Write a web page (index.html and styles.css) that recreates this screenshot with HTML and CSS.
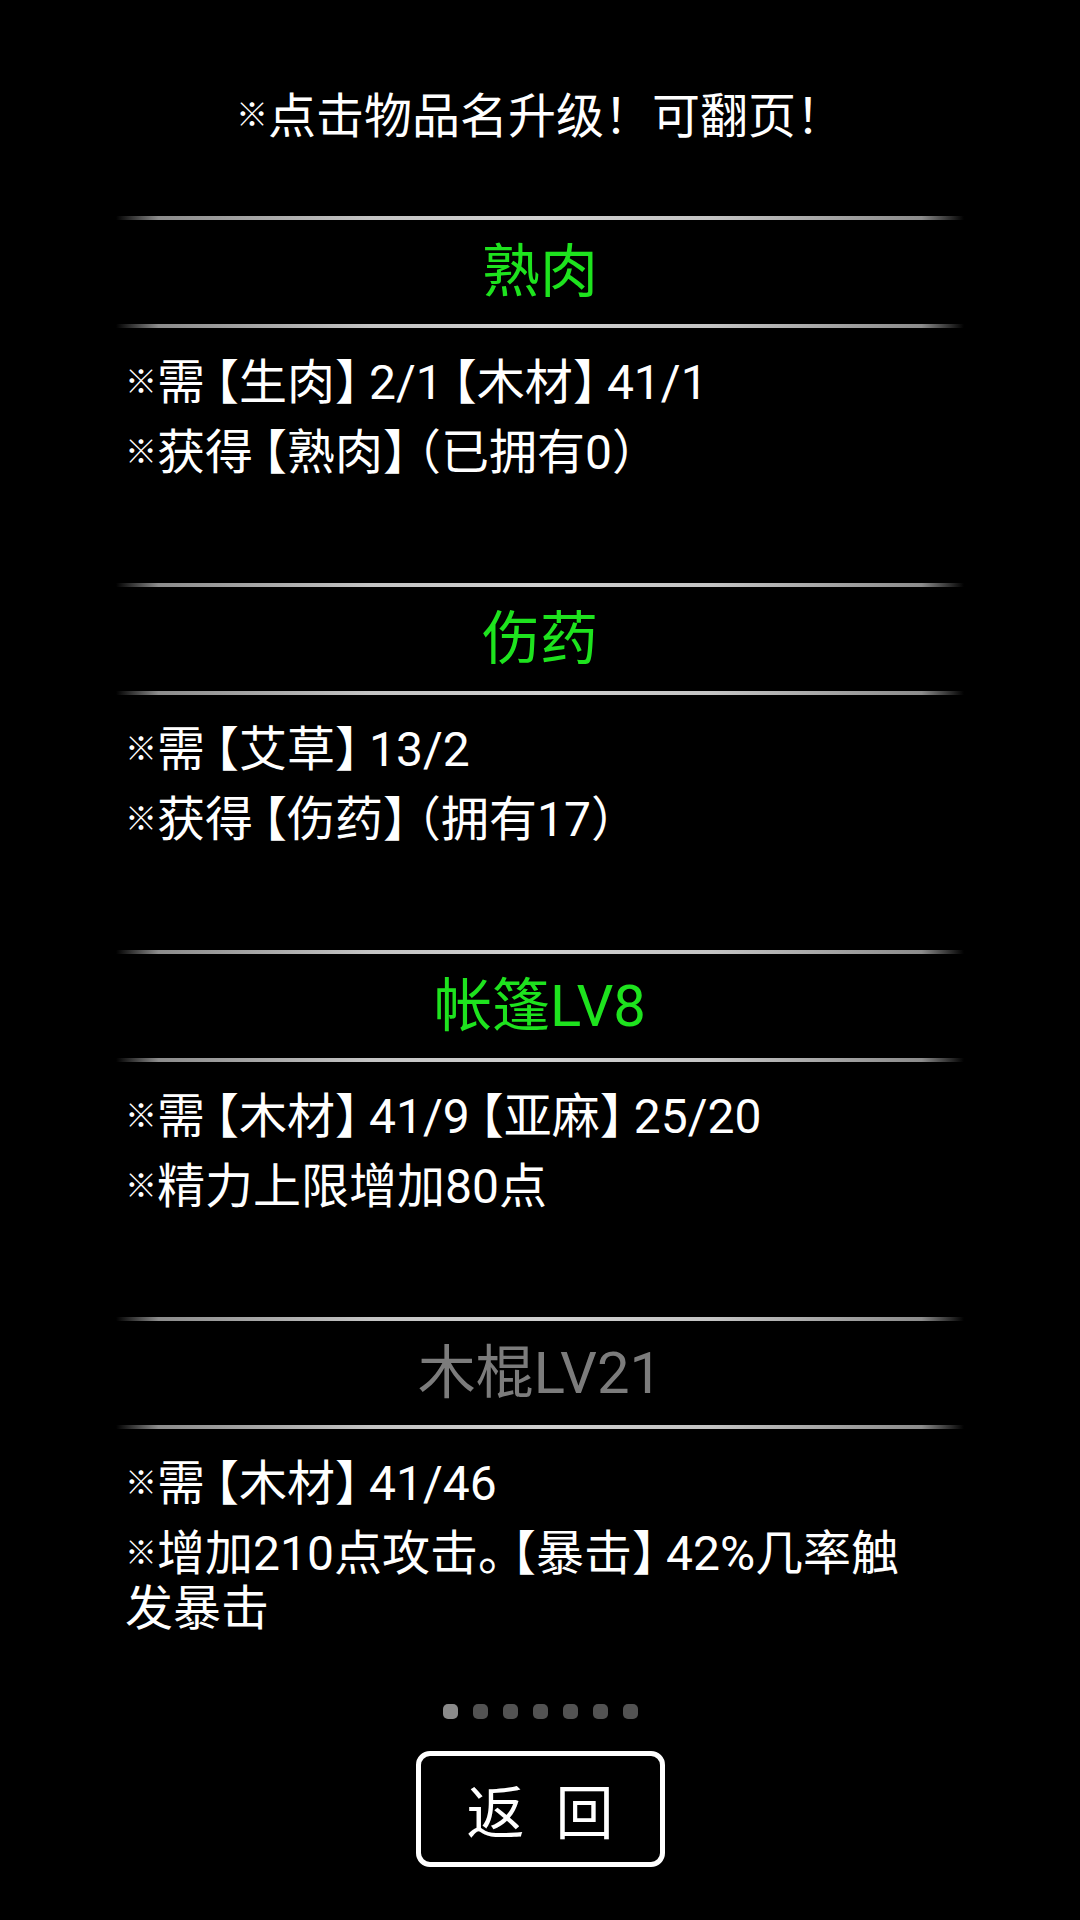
FILE: index.html
```html
<!DOCTYPE html>
<html lang="zh-CN">
<head>
    <meta charset="UTF-8">
    <meta name="viewport" content="width=1080">
    <title>升级</title>
    <link rel="stylesheet" href="styles.css">
</head>
<body>
    <p class="tip"><span class="mark">※</span>点击物品名升级！可翻页！</p>

    <div class="list">
        <div class="item">
            <div class="rule"></div>
            <div class="name ok">熟肉</div>
            <div class="rule"></div>
            <div class="desc">
                <p><span class="mark">※</span>需<span class="tag">生肉</span>2/1<span class="tag">木材</span>41/1</p>
                <p><span class="mark">※</span>获得<span class="tag">熟肉</span>（已拥有0）</p>
            </div>
        </div>
        <div class="item">
            <div class="rule"></div>
            <div class="name ok">伤药</div>
            <div class="rule"></div>
            <div class="desc">
                <p><span class="mark">※</span>需<span class="tag">艾草</span>13/2</p>
                <p><span class="mark">※</span>获得<span class="tag">伤药</span>（拥有17）</p>
            </div>
        </div>
        <div class="item">
            <div class="rule"></div>
            <div class="name ok">帐篷LV8</div>
            <div class="rule"></div>
            <div class="desc">
                <p><span class="mark">※</span>需<span class="tag">木材</span>41/9<span class="tag">亚麻</span>25/20</p>
                <p><span class="mark">※</span>精力上限增加80点</p>
            </div>
        </div>
        <div class="item last">
            <div class="rule"></div>
            <div class="name off">木棍LV21</div>
            <div class="rule"></div>
            <div class="desc">
                <p><span class="mark">※</span>需<span class="tag">木材</span>41/46</p>
                <p><span class="mark">※</span>增加210点攻击。<span class="tag">暴击</span>42%几率触<br>发暴击</p>
            </div>
        </div>
    </div>

    <div class="pager">
        <span class="dot on"></span>
        <span class="dot"></span>
        <span class="dot"></span>
        <span class="dot"></span>
        <span class="dot"></span>
        <span class="dot"></span>
        <span class="dot"></span>
    </div>

    <div class="btn-row">
        <button class="back">返 回</button>
    </div>
</body>
</html>
```

FILE: styles.css
```css
body {
    margin: 0;
    padding: 85px 0 0;
    background-color: #000;
    color: #fff;
    font-family: Roboto, "Noto Sans CJK SC", sans-serif;
    width: 1080px;
    min-height: 1920px;
}

.tip {
    margin: 0;
    font-size: 48px;
    line-height: 64px;
    text-align: center;
}

/* the reference mark is a small glyph, not a full-width one */
.mark {
    font-family: "Noto Sans CJK SC", sans-serif;
    font-size: 32px;
    font-weight: bold;
    line-height: 0;
    vertical-align: 6px;
}

.tip .mark {
    vertical-align: 7px;
}

/* item names in brackets, brackets narrower than full width */
.tag::before {
    content: "【";
    margin-left: -14px;
}

.tag::after {
    content: "】";
    margin-right: -14px;
}

/* list */
.list {
    width: 848px;
    margin: 67px auto 0;
}

.item {
    height: 367px;
}

.item.last {
    height: auto;
}

.rule {
    height: 4px;
    background: linear-gradient(to right, rgba(200, 200, 200, 0) 0, #8c8c8c 5%, #c4c4c4 30%, #d0d0d0 50%, #c4c4c4 70%, #8c8c8c 95%, rgba(200, 200, 200, 0) 100%);
}

.name {
    height: 104px;
    line-height: 104px;
    font-size: 58px;
    text-align: center;
}

.name.ok {
    color: #1ee31e;
}

.name.off {
    color: #7c7c7c;
}

.desc {
    padding: 27px 9px 0;
}

.desc p {
    margin: 0 0 15px;
    font-size: 48px;
    line-height: 55px;
}

/* pager */
.pager {
    display: flex;
    justify-content: center;
    gap: 15px;
    margin-top: 68px;
}

.dot {
    width: 15px;
    height: 15px;
    border-radius: 5px;
    background-color: #525252;
}

.dot.on {
    background-color: #8a8a8a;
}

.btn-row {
    display: flex;
    justify-content: center;
    margin-top: 32px;
}

.back {
    width: 249px;
    height: 116px;
    border: 5px solid #fff;
    border-radius: 14px;
    background-color: #000;
    color: #fff;
    font-family: "Noto Sans CJK SC", sans-serif;
    font-size: 58px;
    word-spacing: 18px;
    padding: 0;
}
```
